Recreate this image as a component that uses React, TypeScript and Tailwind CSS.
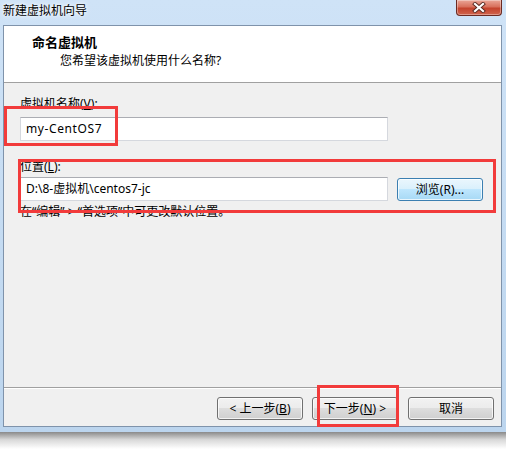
import React from "react";

function WinButton({
  children,
  hot = false,
  className = "",
}: {
  children: React.ReactNode;
  hot?: boolean;
  className?: string;
}) {
  return (
    <div
      className={
        "flex h-[23px] w-[86px] items-center justify-center rounded-[3px] border text-[12px] leading-[16px] shadow-[inset_0_0_0_1px_rgba(255,255,255,0.75)] " +
        (hot
          ? "border-[#3c7fb1] bg-[linear-gradient(#eaf6fd_0%,#d9f0fc_50%,#bee6fd_50%,#a7d9f5_100%)] "
          : "border-[#707070] bg-[linear-gradient(#f2f2f2_0%,#ebebeb_50%,#dddddd_50%,#cfcfcf_100%)] ") +
        className
      }
    >
      {children}
    </div>
  );
}

function CloseButton() {
  return (
    <div className="flex h-[16px] w-[46px] items-center justify-center rounded-b-[4px] border border-t-0 border-[#6b2a22] bg-[linear-gradient(#eaa697_0%,#d8705c_45%,#c4432d_55%,#d0654e_100%)] shadow-[inset_0_0_0_1px_rgba(255,255,255,0.35)]">
      <svg width="14" height="11" viewBox="0 0 14 11">
        <path d="M3 2 L11 9 M11 2 L3 9" stroke="#5a2a22" strokeWidth="4" strokeLinecap="square" />
        <path d="M3 2 L11 9 M11 2 L3 9" stroke="#ffffff" strokeWidth="2.2" strokeLinecap="square" />
      </svg>
    </div>
  );
}

function TextBox({ value, className = "" }: { value: string; className?: string }) {
  return (
    <div
      className={
        "flex h-[24px] w-[368px] items-center border border-[#d5d8de] border-t-[#abadb3] bg-white pl-[5px] text-[12px] leading-[16px] " +
        className
      }
    >
      {value}
    </div>
  );
}

export default function App() {
  return (
    <div className="relative h-[449px] w-[506px] overflow-hidden bg-white text-[12px] text-black font-['Noto_Sans','Noto_Sans_CJK_SC',sans-serif]">
      {/* window frame */}
      <div className="flex h-[432px] flex-col bg-[linear-gradient(#cfe3f7,#bcd5ee)] pb-[5px] pl-[3px] pr-[4px]">
        <div className="flex h-[25px] items-start justify-between">
          <span className="pt-[3px] leading-[16px] [text-shadow:0_0_6px_#fff,0_0_3px_#fff]">
            新建虚拟机向导
          </span>
          <CloseButton />
        </div>

        <div className="flex flex-1 flex-col border border-[#7f93ab] bg-[#f0f0f0]">
          {/* header */}
          <div className="h-[57px] border-b border-[#a0a0a0] bg-white pl-[28px] pt-[8px]">
            <div className="text-[13px] font-bold leading-[16px]">命名虚拟机</div>
            <div className="mt-[3px] pl-[28px] leading-[16px]">您希望该虚拟机使用什么名称?</div>
          </div>

          {/* body */}
          <div className="flex-1 pl-[16px] pt-[13px]">
            <div className="leading-[16px]">
              虚拟机名称(<span className="underline">V</span>):
            </div>
            <div className="mt-[5px]">
              <TextBox value="my-CentOS7" className="tracking-[0.6px]" />
            </div>
            <div className="mt-[18px] leading-[16px]">
              位置(<span className="underline">L</span>):
            </div>
            <div className="mt-[2px] flex items-start gap-[9px]">
              <TextBox value="D:\8-虚拟机\centos7-jc" />
              <WinButton hot className="mt-[1px]">
                浏览(R)...
              </WinButton>
            </div>
            <div className="mt-[3px] leading-[16px]">在“编辑” &gt; “首选项”中可更改默认位置。</div>
          </div>

          {/* footer */}
          <div className="flex h-[39px] items-start justify-end border-t border-[#a0a0a0] pr-[7px] pt-[9px] shadow-[inset_0_1px_0_#ffffff]">
            <WinButton>
              &lt; 上一步(<span className="underline">B</span>)
            </WinButton>
            <WinButton className="ml-[9px]">
              下一步(<span className="underline">N</span>) &gt;
            </WinButton>
            <WinButton className="ml-[10px]">取消</WinButton>
          </div>
        </div>
      </div>

      {/* window drop shadow */}
      <div className="h-[17px] bg-[linear-gradient(#8a8a8a,#d8d8d8_45%,#ffffff)]" />

      {/* red annotation boxes */}
      <div className="absolute left-[4px] top-[106px] h-[40px] w-[114px] border-[3px] border-[#f23b3b]" />
      <div className="absolute left-[18px] top-[159px] h-[54px] w-[478px] border-[3px] border-[#f23b3b]" />
      <div className="absolute left-[317px] top-[385px] h-[42px] w-[82px] border-[3px] border-[#f23b3b]" />
    </div>
  );
}
